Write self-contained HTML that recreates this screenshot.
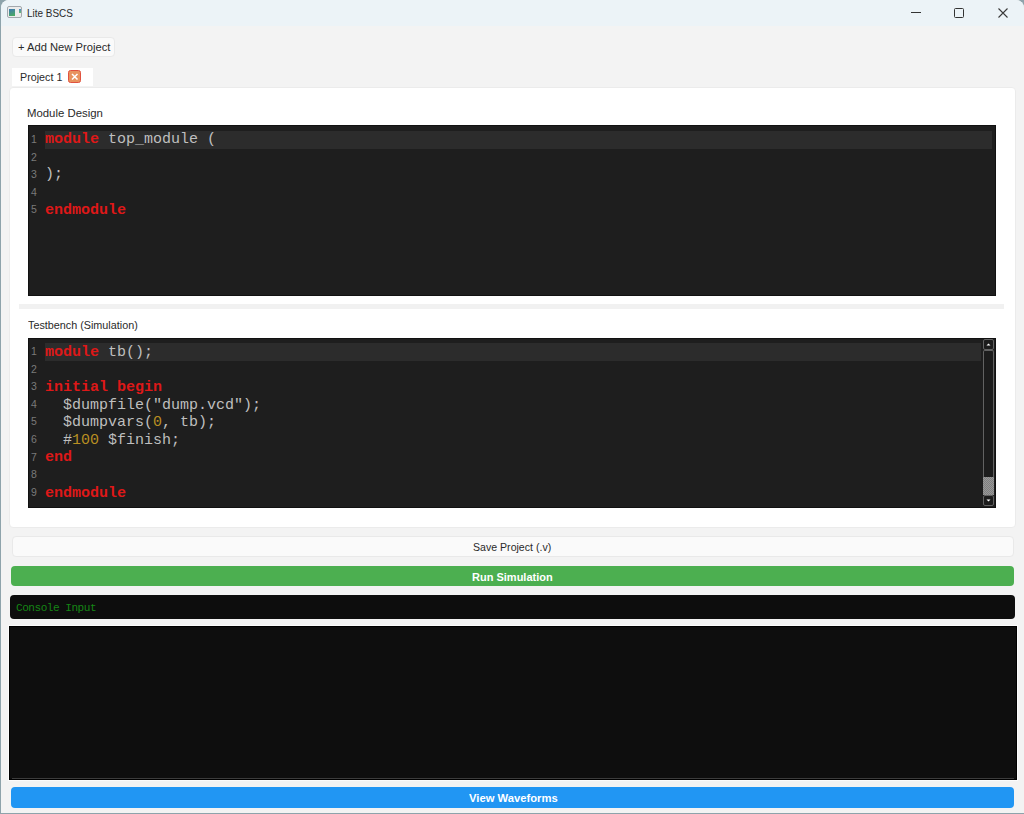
<!DOCTYPE html>
<html><head><meta charset="utf-8">
<style>
*{box-sizing:border-box;margin:0;padding:0}
html,body{width:1024px;height:814px;overflow:hidden;background:#8ea3ab;font-family:"Liberation Sans",sans-serif}
.abs{position:absolute}
#win{position:absolute;left:1px;top:0;width:1023px;height:813px;background:#f3f3f3;border-radius:8px 8px 0 0;overflow:hidden}
#title{position:absolute;left:0;top:0;width:1023px;height:26px;background:#ecf3f7}
.t{position:absolute;white-space:pre;line-height:12px;font-size:11.5px;color:#2a2a2a;transform-origin:0 0}
.btn{position:absolute;border-radius:4px}
.ed{position:absolute;background:#1e1e1e;border:1px solid #111}
.hl{position:absolute;background:#2c2c2c}
.ln{position:absolute;font-family:"Liberation Sans",sans-serif;font-size:10.5px;color:#7a7a7a;line-height:17.6px;white-space:pre}
.code{position:absolute;font-family:"Liberation Mono",monospace;font-size:15px;color:#bfbfbf;white-space:pre;line-height:17.6px}
.kw{color:#de1818;font-weight:bold}
.num{color:#b88f22}
.sbb{position:absolute;border:1.5px solid #626262;border-radius:2px;background:#1c1c1c}
</style></head><body>
<div id="win">
  <div id="title">
    <div class="abs" style="left:6px;top:6px;width:15px;height:12px;border:1.5px solid #a3a8ad;border-radius:2px;background:#ececec"></div>
    <div class="abs" style="left:8px;top:9px;width:6px;height:7px;background:linear-gradient(160deg,#3f78b5,#4caf5a)"></div>
    <div class="abs" style="left:18px;top:9px;width:2px;height:4px;background:linear-gradient(#4a88c8,#6cc070)"></div>
    <div class="t" id="t1" style="left:26.3px;top:7.1px;transform:scaleX(0.865);">Lite BSCS</div>
    <div class="abs" style="left:910px;top:12px;width:10px;height:1px;background:#333"></div>
    <div class="abs" style="left:953px;top:8px;width:10px;height:10px;border:1.3px solid #333;border-radius:1.5px"></div>
    <svg class="abs" style="left:996px;top:7px" width="12" height="12" viewBox="0 0 12 12"><path d="M1.5 1.5L10.5 10.5M10.5 1.5L1.5 10.5" stroke="#3a3a3a" stroke-width="1.1"/></svg>
  </div>

  <div class="btn" style="left:11px;top:37px;width:103px;height:20px;background:#fafafa;border:1px solid #e9e9e9"></div>
  <div class="t" id="t2" style="left:17.0px;top:41.3px;transform:scaleX(0.973);">+ Add New Project</div>

  <div class="abs" style="left:11px;top:68px;width:81px;height:18px;background:#fff"></div>
  <div class="t" id="t3" style="left:19.0px;top:70.6px;transform:scaleX(0.934);">Project 1</div>
  <div class="abs" style="left:67px;top:70px;width:13px;height:13px;background:#e8935f;border:1.5px solid #e0523f;border-radius:2.5px"></div>
  <svg class="abs" style="left:67px;top:70px" width="13" height="13" viewBox="0 0 13 13"><path d="M4 4L9.5 9.5M9.5 4L4 9.5" stroke="#fff" stroke-width="1.5"/></svg>

  <div class="abs" style="left:8px;top:87px;width:1007px;height:441px;background:#fff;border:1px solid #ebebeb;border-radius:4px"></div>

  <div class="t" id="t4" style="left:26.1px;top:106.6px;transform:scaleX(0.988);">Module Design</div>
  <div class="ed" style="left:27px;top:125px;width:968px;height:171px"></div>
  <div class="hl" style="left:44px;top:131px;width:947px;height:17.6px"></div>
  <div class="ln" style="left:30px;top:131px">1
2
3
4
5</div>
  <div class="code" style="left:44px;top:131.3px"><span class="kw">module</span> top_module (

);

<span class="kw">endmodule</span></div>

  <div class="abs" style="left:18px;top:304px;width:985px;height:5px;background:#f1f1f1"></div>

  <div class="t" id="t5" style="left:27.4px;top:319.0px;transform:scaleX(0.938);">Testbench (Simulation)</div>
  <div class="ed" style="left:27px;top:338px;width:968px;height:170px"></div>
  <div class="hl" style="left:44px;top:343px;width:936px;height:17.6px"></div>
  <div class="ln" style="left:30px;top:343px">1
2
3
4
5
6
7
8
9</div>
  <div class="code" style="left:44px;top:343.8px"><span class="kw">module</span> tb();

<span class="kw">initial</span> <span class="kw">begin</span>
  $dumpfile("dump.vcd");
  $dumpvars(<span class="num">0</span>, tb);
  #<span class="num">100</span> $finish;
<span class="kw">end</span>

<span class="kw">endmodule</span></div>

  <!-- scrollbar -->
  <div class="sbb" style="left:982px;top:339px;width:11px;height:11px"></div>
  <svg class="abs" style="left:982px;top:339px" width="11" height="11" viewBox="0 0 11 11"><path d="M3.5 6.5L5.5 4.5L7.5 6.5Z" fill="#fff"/></svg>
  <div class="sbb" style="left:982px;top:350px;width:11px;height:127px;border-bottom:none;border-radius:2px 2px 0 0"></div>
  <div class="abs" style="left:982px;top:477px;width:11px;height:18px;background:repeating-conic-gradient(#999 0 25%,#7f7f7f 0 50%) 0 0/2px 2px"></div>
  <div class="sbb" style="left:982px;top:495px;width:11px;height:11px"></div>
  <svg class="abs" style="left:982px;top:495px" width="11" height="11" viewBox="0 0 11 11"><path d="M3.5 4.5L5.5 6.5L7.5 4.5Z" fill="#fff"/></svg>

  <div class="btn" style="left:11px;top:536px;width:1002px;height:21px;background:#fafafa;border:1px solid #e9e9e9"></div>
  <div class="t" id="t6" style="left:472.2px;top:541px;transform:scaleX(0.92);">Save Project (.v)</div>

  <div class="btn" style="left:10px;top:566px;width:1003px;height:20px;background:#4caf50"></div>
  <div class="t" id="t7" style="left:471.1px;top:570.5px;transform:scaleX(0.957);color:#fff;font-weight:bold">Run Simulation</div>

  <div class="btn" style="left:9px;top:595px;width:1005px;height:24px;background:#0d0d0d"></div>
  <div class="t" id="t8" style="left:14.6px;top:601.8px;transform:scaleX(1.01);font-family:'Liberation Mono',monospace;font-size:11px;color:#158515;letter-spacing:-0.5px">Console Input</div>

  <div class="abs" style="left:7px;top:625px;width:1010px;height:156px;border:1px solid #fcfcfc"></div>
  <div class="abs" style="left:8px;top:626px;width:1008px;height:154px;background:#0e0e0e;border:1px solid #000"></div>
  <div class="abs" style="left:11px;top:778px;width:1002px;height:1px;background:#3c3c3c"></div>

  <div class="btn" style="left:10px;top:787px;width:1003px;height:21px;background:#2196f3"></div>
  <div class="t" id="t9" style="left:467.8px;top:792.0px;transform:scaleX(0.977);color:#fff;font-weight:bold">View Waveforms</div>
</div>
</body></html>
